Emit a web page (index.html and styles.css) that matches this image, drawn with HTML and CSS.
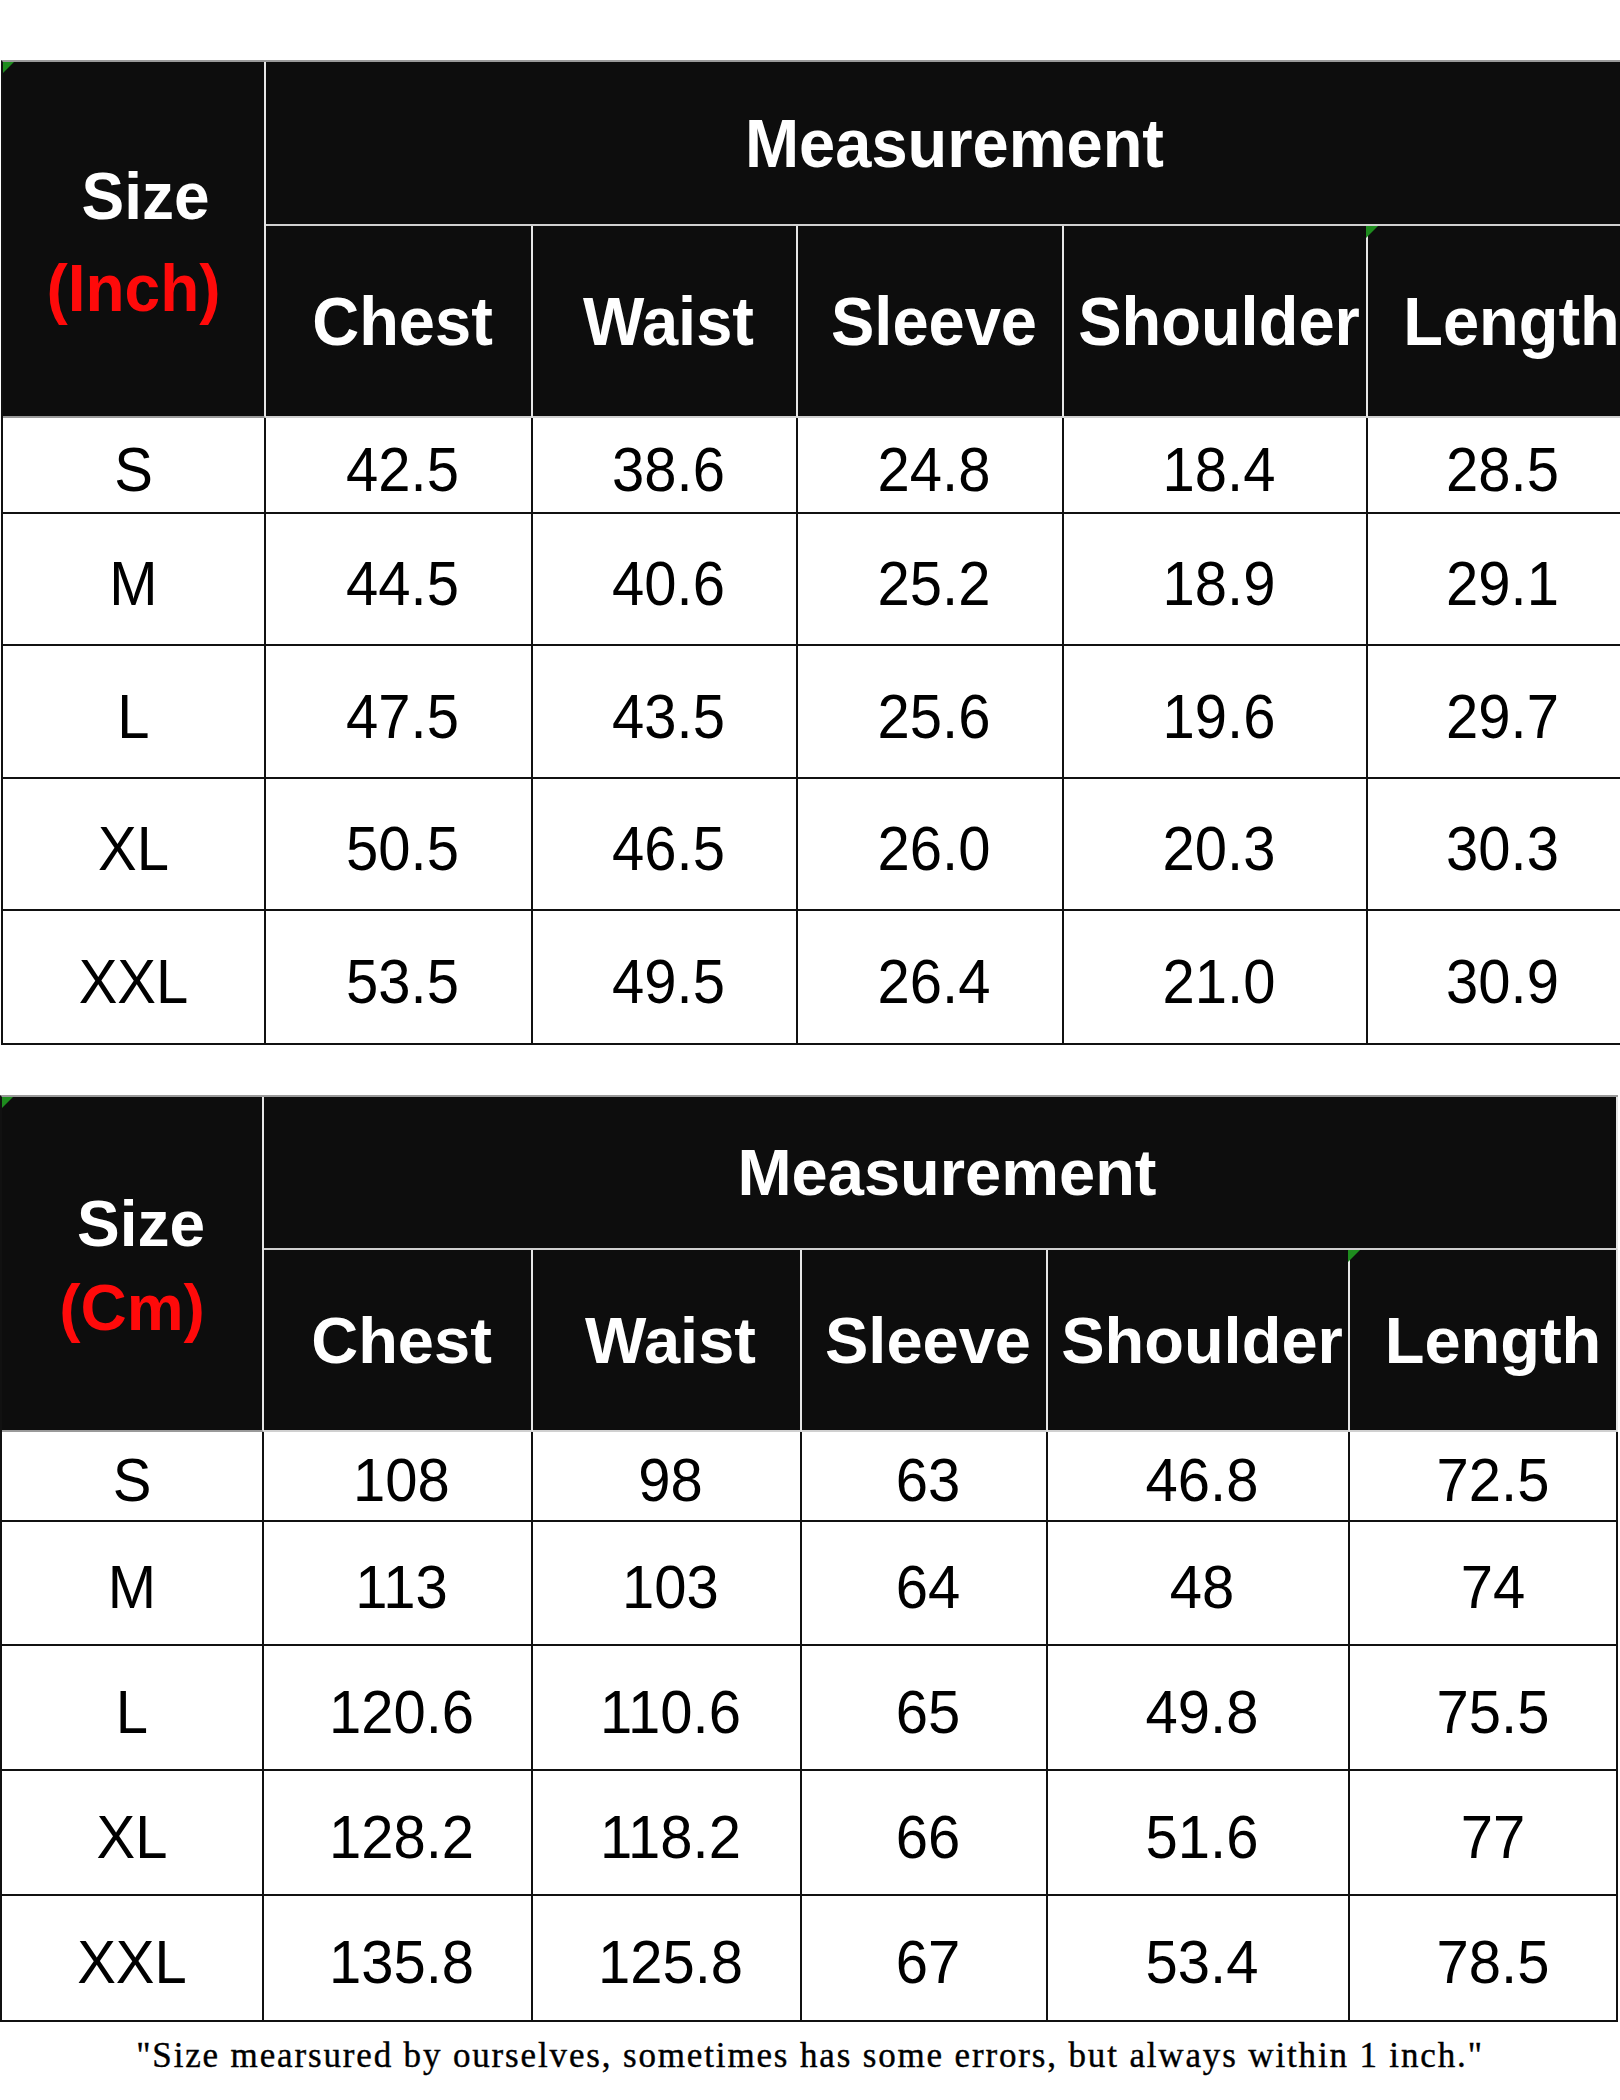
FILE: index.html
```html
<!DOCTYPE html>
<html lang="en">
<head>
<meta charset="utf-8">
<title>Size Chart</title>
<link rel="stylesheet" href="styles.css">
</head>
<body>
<div class="page">
  <div class="chart chart-inch">
    <div class="cell head corner"><i class="flag"></i><span class="line size">Size</span><span class="line unit">(Inch)</span></div>
    <div class="cell head group"><span class="t">Measurement</span></div>
    <div class="cell head"><span class="t">Chest</span></div>
    <div class="cell head"><span class="t">Waist</span></div>
    <div class="cell head"><span class="t">Sleeve</span></div>
    <div class="cell head"><span class="t">Shoulder</span></div>
    <div class="cell head"><i class="flag"></i><span class="t">Length</span></div>

    <div class="cell"><span class="t">S</span></div><div class="cell"><span class="t">42.5</span></div><div class="cell"><span class="t">38.6</span></div><div class="cell"><span class="t">24.8</span></div><div class="cell"><span class="t">18.4</span></div><div class="cell"><span class="t">28.5</span></div>
    <div class="cell"><span class="t">M</span></div><div class="cell"><span class="t">44.5</span></div><div class="cell"><span class="t">40.6</span></div><div class="cell"><span class="t">25.2</span></div><div class="cell"><span class="t">18.9</span></div><div class="cell"><span class="t">29.1</span></div>
    <div class="cell"><span class="t">L</span></div><div class="cell"><span class="t">47.5</span></div><div class="cell"><span class="t">43.5</span></div><div class="cell"><span class="t">25.6</span></div><div class="cell"><span class="t">19.6</span></div><div class="cell"><span class="t">29.7</span></div>
    <div class="cell"><span class="t">XL</span></div><div class="cell"><span class="t">50.5</span></div><div class="cell"><span class="t">46.5</span></div><div class="cell"><span class="t">26.0</span></div><div class="cell"><span class="t">20.3</span></div><div class="cell"><span class="t">30.3</span></div>
    <div class="cell"><span class="t">XXL</span></div><div class="cell"><span class="t">53.5</span></div><div class="cell"><span class="t">49.5</span></div><div class="cell"><span class="t">26.4</span></div><div class="cell"><span class="t">21.0</span></div><div class="cell"><span class="t">30.9</span></div>
  </div>

  <div class="chart chart-cm">
    <div class="cell head corner"><i class="flag"></i><span class="line size">Size</span><span class="line unit">(Cm)</span></div>
    <div class="cell head group"><span class="t">Measurement</span></div>
    <div class="cell head"><span class="t">Chest</span></div>
    <div class="cell head"><span class="t">Waist</span></div>
    <div class="cell head"><span class="t">Sleeve</span></div>
    <div class="cell head"><span class="t">Shoulder</span></div>
    <div class="cell head"><i class="flag"></i><span class="t">Length</span></div>

    <div class="cell"><span class="t">S</span></div><div class="cell"><span class="t">108</span></div><div class="cell"><span class="t">98</span></div><div class="cell"><span class="t">63</span></div><div class="cell"><span class="t">46.8</span></div><div class="cell"><span class="t">72.5</span></div>
    <div class="cell"><span class="t">M</span></div><div class="cell"><span class="t">113</span></div><div class="cell"><span class="t">103</span></div><div class="cell"><span class="t">64</span></div><div class="cell"><span class="t">48</span></div><div class="cell"><span class="t">74</span></div>
    <div class="cell"><span class="t">L</span></div><div class="cell"><span class="t">120.6</span></div><div class="cell"><span class="t">110.6</span></div><div class="cell"><span class="t">65</span></div><div class="cell"><span class="t">49.8</span></div><div class="cell"><span class="t">75.5</span></div>
    <div class="cell"><span class="t">XL</span></div><div class="cell"><span class="t">128.2</span></div><div class="cell"><span class="t">118.2</span></div><div class="cell"><span class="t">66</span></div><div class="cell"><span class="t">51.6</span></div><div class="cell"><span class="t">77</span></div>
    <div class="cell"><span class="t">XXL</span></div><div class="cell"><span class="t">135.8</span></div><div class="cell"><span class="t">125.8</span></div><div class="cell"><span class="t">67</span></div><div class="cell"><span class="t">53.4</span></div><div class="cell"><span class="t">78.5</span></div>
  </div>

  <p class="note">"Size mearsured by ourselves, sometimes has some errors, but always within 1 inch."</p>
</div>
</body>
</html>
```

FILE: styles.css
```css
html, body {
  margin: 0;
  padding: 0;
  background: #ffffff;
}

.page {
  width: 1620px;
  overflow: hidden;
  padding-top: 60px;
  font-family: "Liberation Sans", Arial, sans-serif;
  color: #000;
}

.chart {
  display: grid;
  border-top: 2px solid #9a9a9a;
  border-left: 2px solid #111;
}

.chart-inch {
  margin-left: 1px;
  width: 1650px;
  grid-template-columns: 263px 267px 265px 266px 304px 285px;
  grid-template-rows: 164px 192px 96px 132px 133px 132px 134px;
}

.chart-cm {
  margin-top: 50px;
  width: 1616px;
  grid-template-columns: 262px 269px 269px 246px 302px 268px;
  grid-template-rows: 153px 182px 90px 124px 125px 125px 126px;
}

.cell {
  position: relative;
  box-sizing: border-box;
  display: flex;
  align-items: center;
  justify-content: center;
  border-right: 2px solid #111;
  border-bottom: 2px solid #111;
  font-size: 58px;
  padding-top: 8px;
  padding-left: 8px;
  background: #fff;
}

.cell .t {
  display: inline-block;
  white-space: nowrap;
  line-height: 1;
}

.chart-inch .cell .t { transform: scaleY(1.1); }
.chart-cm .cell .t { transform: scaleY(1.05); }

.cell.head {
  background: #0d0d0d;
  color: #ffffff;
  font-weight: bold;
  font-size: 65px;
  padding-top: 0;
  border-right-color: #e6e6e6;
  border-bottom-color: #d0d0d0;
}

.chart-inch .cell.head .t { transform: scaleY(1.04); }
.chart-cm .cell.head .t { transform: none; }

/* first column of data rows */
.chart > .cell:nth-child(6n+8) { padding-left: 0; }

/* last column */
.chart-inch > .cell:nth-child(6n+7) { padding-left: 4px; }
.chart-inch > .cell:nth-child(6n+13) { padding-left: 0; padding-right: 14px; }
.chart-cm > .cell:nth-child(6n+7) { padding-left: 20px; }

.cell.group {
  grid-column: span 5;
}

.chart-inch .cell.group { padding-left: 0; padding-right: 8px; }
.chart-cm .cell.group { padding-left: 14px; }

.cell.corner {
  grid-row: span 2;
  flex-direction: column;
  padding-left: 0;
  border-bottom-color: #9a9a9a;
}

.corner .line {
  display: block;
  text-align: center;
  white-space: nowrap;
}

.chart-inch .corner .line {
  line-height: 92px;
  transform: scaleY(1.04);
}

.chart-cm .corner .line {
  line-height: 84px;
}

.chart-inch .corner { padding-top: 6px; font-size: 64px; }
.chart-cm .corner { padding-top: 4px; font-size: 64px; }

.chart-inch .corner .size { padding-left: 24px; }
.chart-cm .corner .size { padding-left: 18px; }

.corner .unit {
  color: #ff0a0a;
}

.flag {
  position: absolute;
  top: 0;
  left: -2px;
  width: 0;
  height: 0;
  border-top: 12px solid #1e8c1e;
  border-right: 12px solid transparent;
}

.corner .flag {
  left: 0;
  border-top-width: 11px;
  border-right-width: 11px;
}

.note {
  margin: 14px 0 0;
  text-align: center;
  font-family: "Liberation Serif", "Times New Roman", serif;
  font-size: 35px;
  letter-spacing: 1.85px;
  -webkit-text-stroke: 0.4px #000;
  line-height: 40px;
  color: #000;
}
```
